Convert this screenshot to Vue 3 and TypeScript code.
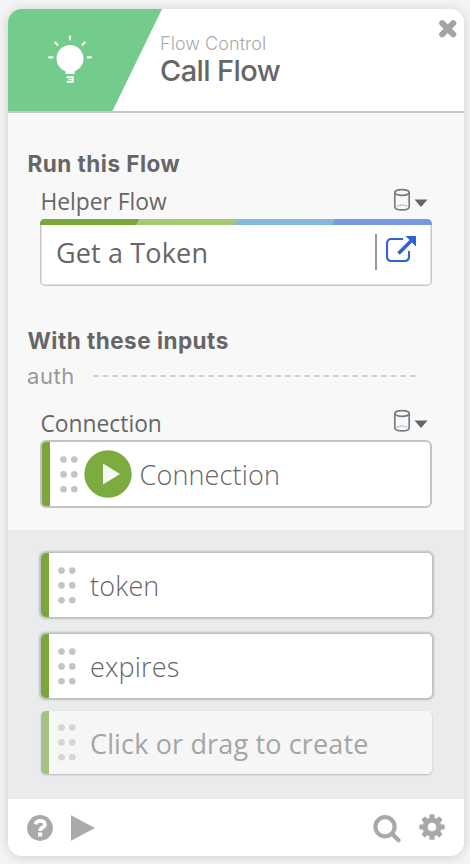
<script setup lang="ts">
interface Output {
  label: string
  placeholder?: boolean
}

const outputs: Output[] = [
  { label: 'token' },
  { label: 'expires' },
  { label: 'Click or drag to create', placeholder: true },
]

const rays: number[] = [-90, -45, 0, 45, 90]
const teeth: number[] = [0, 45, 90, 135, 180, 225, 270, 315]
</script>

<template>
  <main class="stage">
    <article class="card">
      <header class="head">
        <svg class="banner" width="154" height="102" viewBox="0 0 154 102">
          <path d="M0 0H154L104.500 102H0Z" fill="#73cb8c" />
          <g fill="#fff">
            <circle cx="62" cy="49.500" r="13.500" />
            <path d="M54.500 59H69.500L66.500 61.500V65H57.500V61.500Z" />
          </g>
          <path d="M58.500 68.300H64.800V72.700H58.500" fill="none" stroke="#fff" stroke-width="1.900" />
          <path d="M60.500 70.500H64.500" stroke="#fff" stroke-width="1.200" />
          <path
            v-for="angle in rays"
            :key="angle"
            d="M62 27.500V30.500"
            :transform="`rotate(${angle} 62 48.300)`"
            stroke="#fff"
            stroke-width="2.200"
            stroke-linecap="round"
          />
        </svg>
        <div class="titles">
          <span class="category">Flow Control</span>
          <h1 class="name">Call Flow</h1>
        </div>
        <svg class="close" width="20" height="20" viewBox="0 0 20 20">
          <path d="M4.200 4.200L15.300 15.300M15.300 4.200L4.200 15.300" stroke="#a3a3a3" stroke-width="6" stroke-linecap="round" />
        </svg>
      </header>

      <section class="body">
        <h2 class="heading">Run this Flow</h2>
        <div class="field-label helper">
          <span class="label-text">Helper Flow</span>
          <svg class="type" width="36" height="24" viewBox="0 0 36 24">
            <g fill="none" stroke="#747d86" stroke-width="1.700">
              <ellipse cx="9" cy="4.500" rx="7.200" ry="2.800" />
              <path d="M1.800 4.500V19C1.800 22.800 16.200 22.800 16.200 19V4.500" />
              <path d="M3.500 18.500Q9 15.500 14.500 18.500" stroke-width=".8" stroke-dasharray="2 1" />
            </g>
            <path d="M21.500 11.500H34.500L28 19Z" fill="#666" />
          </svg>
        </div>
        <div class="flow-box">
          <svg class="stripe" width="392" height="6" viewBox="0 0 392 6">
            <path d="M0 0H392V6H0Z" fill="#7799df" />
            <path d="M0 0H295L292 6H0Z" fill="#83b9da" />
            <path d="M0 0H197L194 6H0Z" fill="#a5c96f" />
            <path d="M0 0H99L96 6H0Z" fill="#7aa63c" />
          </svg>
          <div class="flow-row">
            <span class="flow-name">Get a Token</span>
            <span class="divider"></span>
            <svg class="open" width="32" height="28" viewBox="0 0 32 28">
              <path d="M18 4H6.500Q2 4 2 8.500V21.500Q2 26 6.500 26H19.500Q24 26 24 21.500V16" fill="none" stroke="#2f62d3" stroke-width="2.100" />
              <path d="M13.500 18.500L26 6" stroke="#2f62d3" stroke-width="3.600" />
              <path d="M20.500 1H31V11.500Z" fill="#2f62d3" />
            </svg>
          </div>
        </div>

        <h2 class="heading inputs-heading">With these inputs</h2>
        <div class="group">
          <span class="group-name">auth</span>
          <svg width="324" height="2" viewBox="0 0 324 2">
            <path d="M0 1H324" stroke="#c4c4c4" stroke-width="1.300" stroke-dasharray="5.800 3.800" />
          </svg>
        </div>
        <div class="field-label connection">
          <span class="label-text">Connection</span>
          <svg class="type" width="36" height="24" viewBox="0 0 36 24">
            <g fill="none" stroke="#747d86" stroke-width="1.700">
              <ellipse cx="9" cy="4.500" rx="7.200" ry="2.800" />
              <path d="M1.800 4.500V19C1.800 22.800 16.200 22.800 16.200 19V4.500" />
              <path d="M3.500 18.500Q9 15.500 14.500 18.500" stroke-width=".8" stroke-dasharray="2 1" />
            </g>
            <path d="M21.500 11.500H34.500L28 19Z" fill="#666" />
          </svg>
        </div>
        <div class="pill input-pill">
          <svg class="grip" width="18" height="37" viewBox="0 0 18 37">
            <g v-for="y in 3" :key="y" fill="#c4c4c4">
              <circle cx="3.500" :cy="y * 14.800 - 11.200" r="3.300" />
              <circle cx="14.300" :cy="y * 14.800 - 11.200" r="3.300" />
            </g>
          </svg>
          <svg class="play-badge" width="48" height="48" viewBox="0 0 48 48">
            <circle cx="24" cy="24" r="23.700" fill="#7cab3f" />
            <path d="M19 13.500L36 24L19 34.500Z" fill="#f8f8f8" />
          </svg>
          <span class="pill-text">Connection</span>
        </div>
      </section>

      <section class="outputs">
        <div
          v-for="output in outputs"
          :key="output.label"
          class="pill output-pill"
          :class="{ placeholder: output.placeholder }"
        >
          <svg class="grip" width="18" height="37" viewBox="0 0 18 37">
            <g v-for="y in 3" :key="y" :fill="output.placeholder ? '#d5d5d5' : '#c4c4c4'">
              <circle cx="3.500" :cy="y * 14.800 - 11.200" r="3.300" />
              <circle cx="14.300" :cy="y * 14.800 - 11.200" r="3.300" />
            </g>
          </svg>
          <span class="pill-text">{{ output.label }}</span>
        </div>
      </section>

      <footer class="foot">
        <svg width="26" height="26" viewBox="0 0 26 26">
          <circle cx="13" cy="13" r="12.900" fill="#a9a9a9" />
          <path d="M8.300 9.300Q9.700 5.900 13.300 5.900C18.800 5.900 18.800 10.700 15.800 12.300Q13.100 13.700 13.100 16" fill="none" stroke="#fff" stroke-width="3.700" />
          <path d="M11 17.600H15.200V21.600H11Z" fill="#fff" />
        </svg>
        <svg class="run" width="24" height="26" viewBox="0 0 24 26">
          <path d="M0 .3L24 13L0 25.700Z" fill="#a9a9a9" />
        </svg>
        <span class="spacer"></span>
        <svg class="search" width="28" height="28" viewBox="0 0 28 28">
          <g fill="none" stroke="#a9a9a9">
            <circle cx="12" cy="11.700" r="9.600" stroke-width="4.200" />
            <path d="M19.500 19.200L25.500 25.200" stroke-width="4.200" stroke-linecap="round" />
          </g>
        </svg>
        <svg class="gear" width="26" height="26" viewBox="0 0 26 26">
          <circle cx="13" cy="13" r="6.900" fill="none" stroke="#a9a9a9" stroke-width="5.200" />
          <rect
            v-for="angle in teeth"
            :key="angle"
            x="10.400"
            y=".3"
            width="5.200"
            height="5"
            rx="1"
            fill="#a9a9a9"
            :transform="`rotate(${angle} 13 13)`"
          />
        </svg>
      </footer>
    </article>
  </main>
</template>

<style>
body {
  margin: 0;
  background: #f4f4f4;
}
</style>

<style scoped>
* {
  box-sizing: border-box;
}
.stage {
  width: 470px;
  height: 864px;
  padding: 9px 6px 8px 8px;
  overflow: hidden;
  background: #f4f4f4;
  color: #666;
  font-family: "Open Sans", "Noto Sans", sans-serif;
}
.card {
  display: flex;
  flex-direction: column;
  height: 847px;
  overflow: hidden;
  border-radius: 14px;
  background: #f8f8f8;
  box-shadow: 0 1px 12px rgba(0, 0, 0, 0.16);
}
.head {
  display: flex;
  height: 104px;
  flex: none;
  background: #fff;
  border-bottom: 2px solid #c8c8c8;
  font-family: Inter, sans-serif;
}
svg {
  display: block;
  flex: none;
}
.titles {
  display: flex;
  flex: 1;
  flex-direction: column;
  margin-left: -2px;
  padding-top: 23px;
  white-space: nowrap;
}
.category {
  color: #aaa;
  font-size: 18px;
  font-weight: 300;
  line-height: 24px;
  letter-spacing: 0.05px;
}
.name {
  margin: -1px 0 0;
  font-size: 29px;
  font-weight: 500;
  line-height: 32px;
  letter-spacing: -0.6px;
}
.close {
  margin: 10px 6px 0 0;
}
.body {
  height: 417px;
  flex: none;
  padding: 37px 33px 0 19px;
}
.heading {
  margin: 0 0 0 0.5px;
  font-family: Inter, sans-serif;
  font-size: 22.500px;
  font-weight: 700;
  line-height: 28px;
  letter-spacing: 0.480px;
  white-space: nowrap;
}
.field-label {
  display: flex;
  justify-content: space-between;
  margin-left: 13.500px;
  font-size: 22.800px;
  line-height: 30px;
}
.helper {
  height: 41px;
  padding-top: 9px;
}
.type {
  margin: 1px 2px 0 0;
}
.flow-box {
  width: 392px;
  height: 67px;
  margin-left: 13px;
  overflow: hidden;
  background: #fff;
  border-radius: 5px;
  box-shadow: inset 0 0 0 1.5px #c8c8c8;
}
.flow-row {
  display: flex;
  align-items: center;
  height: 56px;
  padding: 0 15px 0 16px;
}
.flow-name {
  flex: 1;
  margin-top: -1px;
  font-size: 27px;
  letter-spacing: 0.15px;
}
.divider {
  width: 2px;
  height: 36px;
  margin: -2px 8.500px 0 0;
  background: #999;
}
.open {
  margin-top: -9px;
}
.inputs-heading {
  margin-top: 41px;
}
.group {
  display: flex;
  align-items: center;
  height: 41px;
  padding-top: 1px;
}
.group-name {
  width: 66px;
  color: #999;
  font-family: Inter, sans-serif;
  font-size: 22px;
  letter-spacing: 0.6px;
}
.connection {
  height: 44px;
  padding-top: 13px;
}
.connection .type {
  margin-top: 0;
}
.pill {
  display: flex;
  align-items: center;
  background: #fff;
  font-size: 27px;
  font-weight: 300;
  letter-spacing: 0.15px;
  white-space: nowrap;
}
.input-pill {
  width: 392px;
  height: 68px;
  margin-left: 13px;
  padding-left: 7px;
  border: 2px solid #c4c4c4;
  border-radius: 6px;
  background: linear-gradient(90deg, #7aa63c 8.500px, #fff 8.500px);
}
.input-pill .grip {
  margin-left: 11px;
}
.play-badge {
  margin: -1px 7.500px 0 6px;
}
.outputs {
  display: flex;
  height: 269px;
  flex: none;
  flex-direction: column;
  gap: 17px;
  padding: 23px 32px 0 33px;
  background: #eaebed;
}
.output-pill {
  height: 64px;
  flex: none;
  padding-left: 17px;
  border-radius: 5px;
  background: linear-gradient(90deg, #7aa63c 8px, #fff 8px);
  box-shadow: 0 0 2px 1.5px #bebebe;
}
.output-pill .grip {
  margin-right: 14px;
}
.placeholder {
  height: 63px;
  margin-top: -4px;
  background: linear-gradient(90deg, #a6c283 8px, #f6f6f6 8px);
  box-shadow: 0 1px 2px rgba(0, 0, 0, 0.22);
  color: #a5a5a5;
  font-weight: 400;
}
.placeholder .pill-text {
  padding-top: 2px;
}
.foot {
  display: flex;
  height: 57px;
  flex: none;
  align-items: flex-start;
  padding: 15.500px 19px 0 19px;
  background: #fff;
}
.run {
  margin-left: 18px;
}
.spacer {
  flex: 1;
}
.gear {
  margin: -1px 0 0 18px;
}
</style>
